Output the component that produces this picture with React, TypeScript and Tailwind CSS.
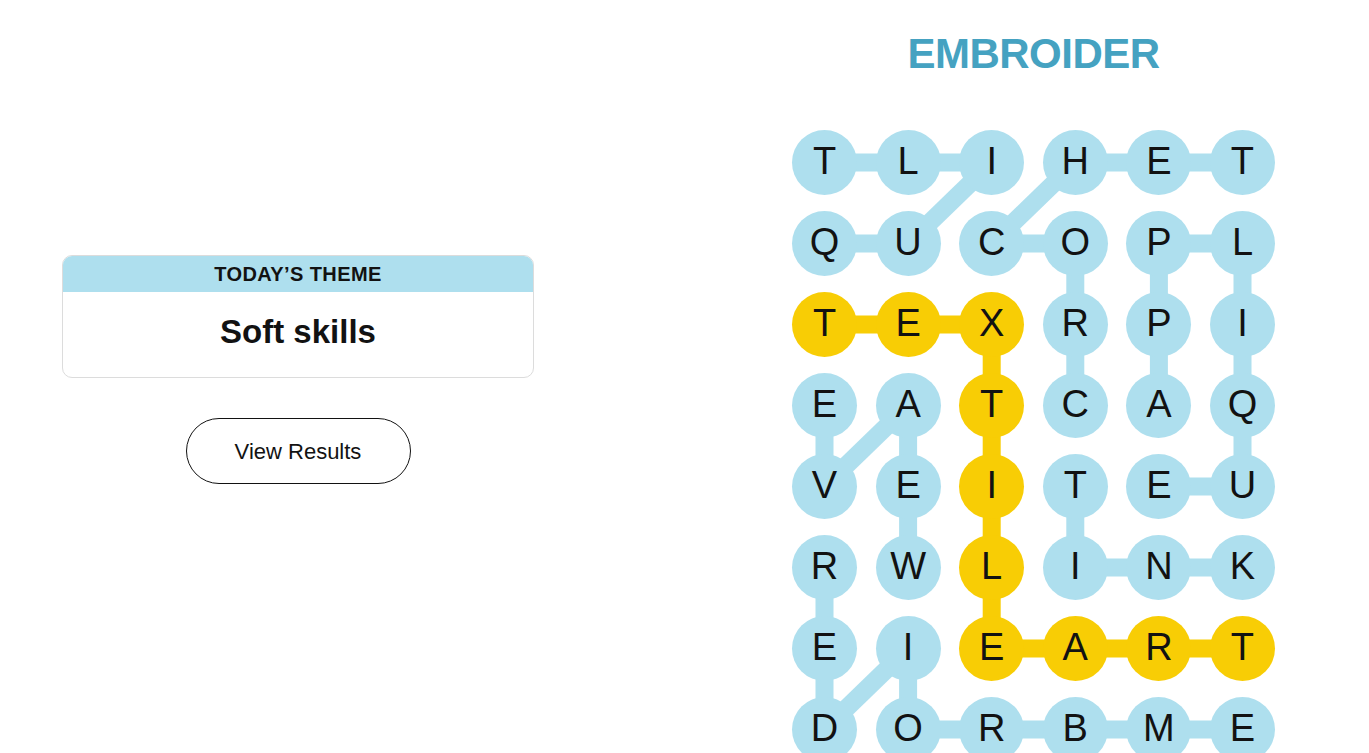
import React from "react";

const GRID = [
  "TLIHET",
  "QUCOPL",
  "TEXRPI",
  "EATCAQ",
  "VEITEU",
  "RWLINK",
  "EIEART",
  "DORBME",
];

const YELLOW = new Set([
  "2,0", "2,1", "2,2", "3,2", "4,2", "5,2", "6,2", "6,3", "6,4", "6,5",
]);

type P = [number, number];
const BLUE_LINES: [P, P][] = [
  // QUILT
  [[1, 0], [1, 1]], [[1, 1], [0, 2]], [[0, 2], [0, 1]], [[0, 1], [0, 0]],
  // CROCHET
  [[3, 3], [2, 3]], [[2, 3], [1, 3]], [[1, 3], [1, 2]], [[1, 2], [0, 3]], [[0, 3], [0, 4]], [[0, 4], [0, 5]],
  // KNIT
  [[5, 5], [5, 4]], [[5, 4], [5, 3]], [[5, 3], [4, 3]],
  // APPLIQUE
  [[3, 4], [2, 4]], [[2, 4], [1, 4]], [[1, 4], [1, 5]], [[1, 5], [2, 5]], [[2, 5], [3, 5]], [[3, 5], [4, 5]], [[4, 5], [4, 4]],
  // WEAVE
  [[5, 1], [4, 1]], [[4, 1], [3, 1]], [[3, 1], [4, 0]], [[4, 0], [3, 0]],
  // EMBROIDER
  [[7, 5], [7, 4]], [[7, 4], [7, 3]], [[7, 3], [7, 2]], [[7, 2], [7, 1]], [[7, 1], [6, 1]], [[6, 1], [7, 0]], [[7, 0], [6, 0]], [[6, 0], [5, 0]],
];
const YELLOW_LINES: [P, P][] = [
  [[2, 0], [2, 1]], [[2, 1], [2, 2]], [[2, 2], [3, 2]], [[3, 2], [4, 2]], [[4, 2], [5, 2]], [[5, 2], [6, 2]], [[6, 2], [6, 3]], [[6, 3], [6, 4]], [[6, 4], [6, 5]],
];

const D = 65;
const CX = 83.6;
const RY = 81;
const cx = (c: number) => D / 2 + c * CX;
const cy = (r: number) => D / 2 + r * RY;

function Board() {
  const w = D + 5 * CX;
  const h = D + 7 * RY;
  return (
    <div className="relative">
      <svg
        className="absolute left-0 top-0"
        width={w}
        height={h}
        viewBox={`0 0 ${w} ${h}`}
      >
        {BLUE_LINES.map(([a, b], i) => (
          <line
            key={"b" + i}
            x1={cx(a[1])}
            y1={cy(a[0])}
            x2={cx(b[1])}
            y2={cy(b[0])}
            stroke="#aedfee"
            strokeWidth={18}
          />
        ))}
        {YELLOW_LINES.map(([a, b], i) => (
          <line
            key={"y" + i}
            x1={cx(a[1])}
            y1={cy(a[0])}
            x2={cx(b[1])}
            y2={cy(b[0])}
            stroke="#f8cd05"
            strokeWidth={18}
          />
        ))}
      </svg>
      <div className="relative grid grid-cols-[repeat(6,65px)] gap-x-[18.6px] gap-y-[16px]">
        {GRID.flatMap((row, r) =>
          row.split("").map((ch, c) => (
            <div
              key={r + "-" + c}
              className={
                "w-[65px] h-[65px] rounded-full flex items-center justify-center text-[38px] leading-none text-[#121212] pb-[3px] " +
                (YELLOW.has(r + "," + c) ? "bg-[#f8cd05]" : "bg-[#aedfee]")
              }
            >
              {ch}
            </div>
          ))
        )}
      </div>
    </div>
  );
}

export default function App() {
  return (
    <div className="min-h-screen bg-white flex font-['Liberation_Sans',Arial,sans-serif] text-[#121212]">
      <div className="w-[596px] shrink-0 flex flex-col items-center pt-[255px]">
        <div className="w-[472px] rounded-[10px] border border-[#dcdcdc] overflow-hidden">
          <div className="h-[36px] bg-[#aedfee] flex items-center justify-center text-[20px] font-bold tracking-[0.4px] leading-none">
            TODAY’S THEME
          </div>
          <div className="h-[85px] flex items-center justify-center pb-[6px] text-[33px] font-bold leading-none">
            Soft skills
          </div>
        </div>
        <button className="mt-[40px] w-[225px] h-[66px] rounded-full border border-[#121212] bg-white text-[22px] leading-none flex items-center justify-center pt-[2px]">
          View Results
        </button>
      </div>
      <div className="pl-[196px] pt-[33px] flex flex-col items-center">
        <h1 className="text-[42px] leading-[42px] font-bold text-[#45a2c1] tracking-[-0.5px] mb-[55px]">
          EMBROIDER
        </h1>
        <Board />
      </div>
    </div>
  );
}
